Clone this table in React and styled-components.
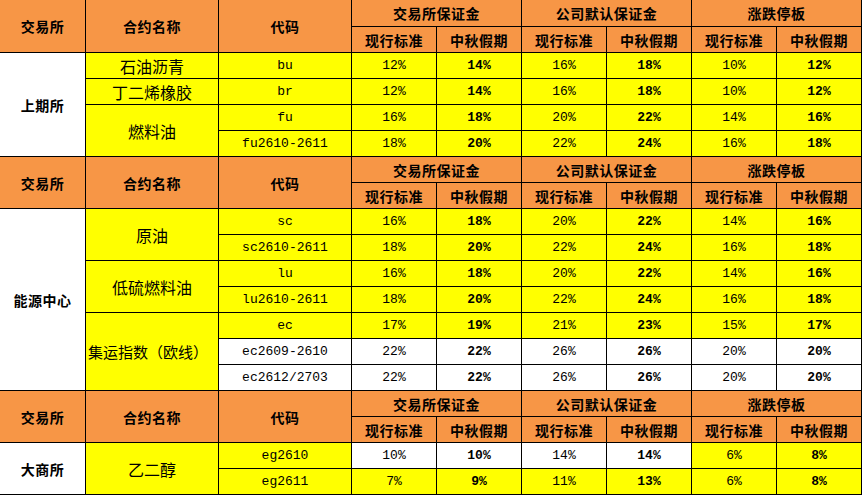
import styled, { createGlobalStyle } from 'styled-components';

const GlobalStyle = createGlobalStyle`
  html, body {
    margin: 0;
    padding: 0;
    background: #fff;
    overflow: hidden;
  }
`;

const ORANGE = '#F79646';
const YELLOW = '#FFFF00';

const Sheet = styled.div`
  display: grid;
  grid-template-columns: 85px 132px 132px repeat(6, 84px);
  grid-template-rows: 26px repeat(18, 25px);
  gap: 1px;
  width: 861px;
  padding: 0 1px 1px 0;
  background: #000;
  font-family: "Noto Sans CJK SC", "Noto Sans", sans-serif;
  color: #000;
`;

const Cell = styled.div`
  grid-row: span ${p => p.$rows || 1};
  grid-column: span ${p => p.$cols || 1};
  display: flex;
  align-items: center;
  justify-content: center;
  background: ${p => p.$bg || YELLOW};
  white-space: nowrap;
  overflow: hidden;
  line-height: 1;
`;

const HeadCell = styled(Cell)`
  background: ${ORANGE};
  font-size: 14px;
  font-weight: 700;
  letter-spacing: 0.5px;
`;

const ExchangeCell = styled(Cell)`
  background: #fff;
  font-size: 14px;
  font-weight: 700;
  letter-spacing: 0.5px;
`;

const NameCell = styled(Cell)`
  font-size: ${p => p.$size || 16}px;
  justify-content: ${p => p.$left ? 'flex-start' : 'center'};
  padding-left: ${p => p.$left ? '2px' : '0'};
`;

const CodeCell = styled(Cell)`
  font-family: "Liberation Mono", "DejaVu Sans Mono", monospace;
  font-size: 13px;
`;

const ValueCell = styled(Cell)`
  font-family: "Liberation Mono", "DejaVu Sans Mono", monospace;
  font-size: 13px;
  font-weight: ${p => p.$bold ? 700 : 400};
`;

const sections = [
  {
    exchange: '上期所',
    groups: [
      { name: '石油沥青', rows: [{ code: 'bu', vals: [12, 14, 16, 18, 10, 12] }] },
      { name: '丁二烯橡胶', rows: [{ code: 'br', vals: [12, 14, 16, 18, 10, 12] }] },
      {
        name: '燃料油',
        rows: [
          { code: 'fu', vals: [16, 18, 20, 22, 14, 16] },
          { code: 'fu2610-2611', vals: [18, 20, 22, 24, 16, 18] },
        ],
      },
    ],
  },
  {
    exchange: '能源中心',
    groups: [
      {
        name: '原油',
        rows: [
          { code: 'sc', vals: [16, 18, 20, 22, 14, 16] },
          { code: 'sc2610-2611', vals: [18, 20, 22, 24, 16, 18] },
        ],
      },
      {
        name: '低硫燃料油',
        rows: [
          { code: 'lu', vals: [16, 18, 20, 22, 14, 16] },
          { code: 'lu2610-2611', vals: [18, 20, 22, 24, 16, 18] },
        ],
      },
      {
        name: '集运指数（欧线）',
        size: 15,
        left: true,
        rows: [
          { code: 'ec', vals: [17, 19, 21, 23, 15, 17] },
          { code: 'ec2609-2610', vals: [22, 22, 26, 26, 20, 20], codeWhite: true, white: [0, 1, 2, 3, 4, 5] },
          { code: 'ec2612/2703', vals: [22, 22, 26, 26, 20, 20], codeWhite: true, white: [0, 1, 2, 3, 4, 5] },
        ],
      },
    ],
  },
  {
    exchange: '大商所',
    groups: [
      {
        name: '乙二醇',
        rows: [
          { code: 'eg2610', vals: [10, 10, 14, 14, 6, 8], white: [0, 1, 2, 3] },
          { code: 'eg2611', vals: [7, 9, 11, 13, 6, 8] },
        ],
      },
    ],
  },
];

function Header({ id }) {
  return (
    <>
      <HeadCell $rows={2}>交易所</HeadCell>
      <HeadCell $rows={2}>合约名称</HeadCell>
      <HeadCell $rows={2}>代码</HeadCell>
      <HeadCell $cols={2}>交易所保证金</HeadCell>
      <HeadCell $cols={2}>公司默认保证金</HeadCell>
      <HeadCell $cols={2}>涨跌停板</HeadCell>
      {['现行标准', '中秋假期', '现行标准', '中秋假期', '现行标准', '中秋假期'].map((t, i) => (
        <HeadCell key={id + i}>{t}</HeadCell>
      ))}
    </>
  );
}

function Section({ section, id }) {
  const total = section.groups.reduce((n, g) => n + g.rows.length, 0);
  const out = [];
  section.groups.forEach((g, gi) => {
    g.rows.forEach((r, ri) => {
      if (gi === 0 && ri === 0) {
        out.push(<ExchangeCell key={`${id}-ex`} $rows={total}>{section.exchange}</ExchangeCell>);
      }
      if (ri === 0) {
        out.push(
          <NameCell key={`${id}-n${gi}`} $rows={g.rows.length} $size={g.size} $left={g.left}>
            {g.name}
          </NameCell>
        );
      }
      out.push(
        <CodeCell key={`${id}-c${gi}-${ri}`} $bg={r.codeWhite ? '#fff' : YELLOW}>
          {r.code}
        </CodeCell>
      );
      r.vals.forEach((v, vi) => {
        out.push(
          <ValueCell
            key={`${id}-v${gi}-${ri}-${vi}`}
            $bold={vi % 2 === 1}
            $bg={r.white && r.white.includes(vi) ? '#fff' : YELLOW}
          >
            {v}%
          </ValueCell>
        );
      });
    });
  });
  return (
    <>
      <Header id={id} />
      {out}
    </>
  );
}

export default function App() {
  return (
    <>
      <GlobalStyle />
      <Sheet>
        {sections.map((s, i) => (
          <Section key={i} id={`s${i}`} section={s} />
        ))}
      </Sheet>
    </>
  );
}
